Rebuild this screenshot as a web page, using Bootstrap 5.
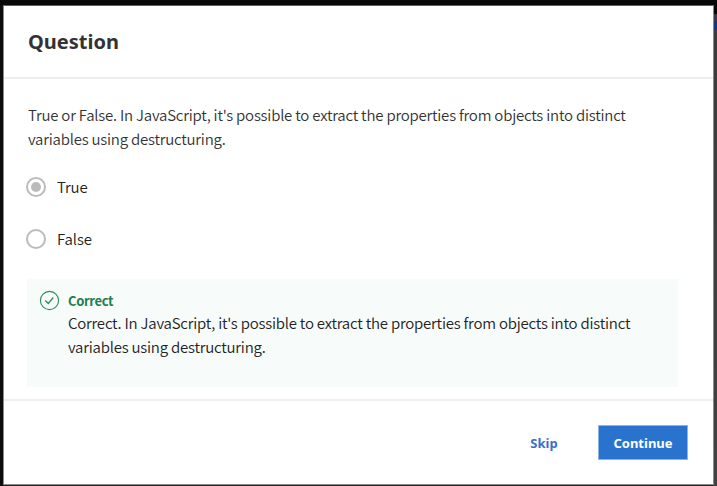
<!DOCTYPE html>
<html lang="en">
<head>
<meta charset="utf-8">
<title>Question</title>
<link href="https://cdn.jsdelivr.net/npm/bootstrap@5.3.0/dist/css/bootstrap.min.css" rel="stylesheet">
<style>
body{width:717px;height:486px;overflow:hidden;padding:5px 3px 1px;font:350 15px/24px "Noto Sans CJK SC","Source Sans Pro",sans-serif;letter-spacing:-.22px;color:#333;
background:linear-gradient(#080808,#080808) 0 0/717px 5px no-repeat,linear-gradient(#0d0d0d,#0d0d0d) 0 0/4px 486px no-repeat,linear-gradient(#080808 14px,#393939 14px,#393939 21px,#0e3b78 21px,#0e3b78 30px,#3b3b3b 30px,#414141) 713px 0/4px 486px no-repeat,#222}
.dialog-box{width:711px;height:480px;border:1px solid #8b8b8b;border-top-color:#605f60;border-radius:0}
.dialog-head{height:73px;border-bottom:2px solid #eee;padding:24px 24px 0}
.dialog-head h1{font:700 20px/24px "Noto Sans",sans-serif;letter-spacing:0;color:#333}
.dialog-main{height:322px;border-bottom:2px solid #eee;padding:24px 35px 0 23px}
.prompt{padding-left:1px;margin-bottom:24px}
.choice{height:24px;color:#222;letter-spacing:-.1px}
.choice svg{margin:-1px 11px 0 -1px}
.choice+.choice{margin-top:28px}
.feedback{height:108px;background:#f7fbfa;color:#222;padding:11px 12px;margin-top:28px}
.feedback svg{margin-top:-1px}
.feedback h2{font:700 13px/20px "Noto Sans CJK SC",sans-serif;letter-spacing:-.35px;color:#1d8050}
.dialog-foot{height:83px;padding-right:25px;font-family:"Noto Sans",sans-serif}
.dialog-foot .btn{font-size:13px;font-weight:700;line-height:18px;letter-spacing:0;border-radius:0}
.btn-skip{color:#3a70c8;padding:8px 0;width:28px;margin-right:40px}
.btn-go,.btn-go:hover{width:90px;height:35px;padding:7px 0;background:#2973ce;border:1px solid #8ab3e6;color:#fff}
</style>
<script src="https://cdn.jsdelivr.net/npm/bootstrap@5.3.0/dist/js/bootstrap.bundle.min.js"></script>
</head>
<body>
<main class="dialog-box bg-white">
<header class="dialog-head"><h1 class="m-0">Question</h1></header>
<section class="dialog-main">
<p class="prompt">True or False. In JavaScript, it's possible to extract the properties from objects into distinct<br>variables using destructuring.</p>
<div class="choice d-flex align-items-center"><svg width="20" height="20"><circle cx="10" cy="10" r="9" fill="none" stroke="#bbb" stroke-width="2"/><circle cx="10" cy="10" r="5" fill="#bbb"/></svg><span>True</span></div>
<div class="choice d-flex align-items-center"><svg width="20" height="20"><circle cx="10" cy="10" r="9" fill="none" stroke="#bbb" stroke-width="2"/></svg><span>False</span></div>
<div class="feedback d-flex gap-2 pt-2">
<svg class="flex-shrink-0" width="21" height="28" viewBox="0 0 21 28"><circle cx="10.5" cy="14.5" r="9.1" fill="none" stroke="#288a60" stroke-width="1.1"/><path d="M6.3 14.5l3 3 5-6" fill="none" stroke="#288a60" stroke-width="1.2"/></svg>
<div class="pt-1"><h2 class="m-0">Correct</h2><p class="m-0 text-nowrap">Correct. In JavaScript, it's possible to extract the properties from objects into distinct<br>variables using destructuring.</p></div>
</div>
</section>
<footer class="dialog-foot d-flex align-items-center justify-content-end"><button class="btn btn-skip border-0" type="button">Skip</button><button class="btn btn-go" type="button">Continue</button></footer>
</main>
</body>
</html>
